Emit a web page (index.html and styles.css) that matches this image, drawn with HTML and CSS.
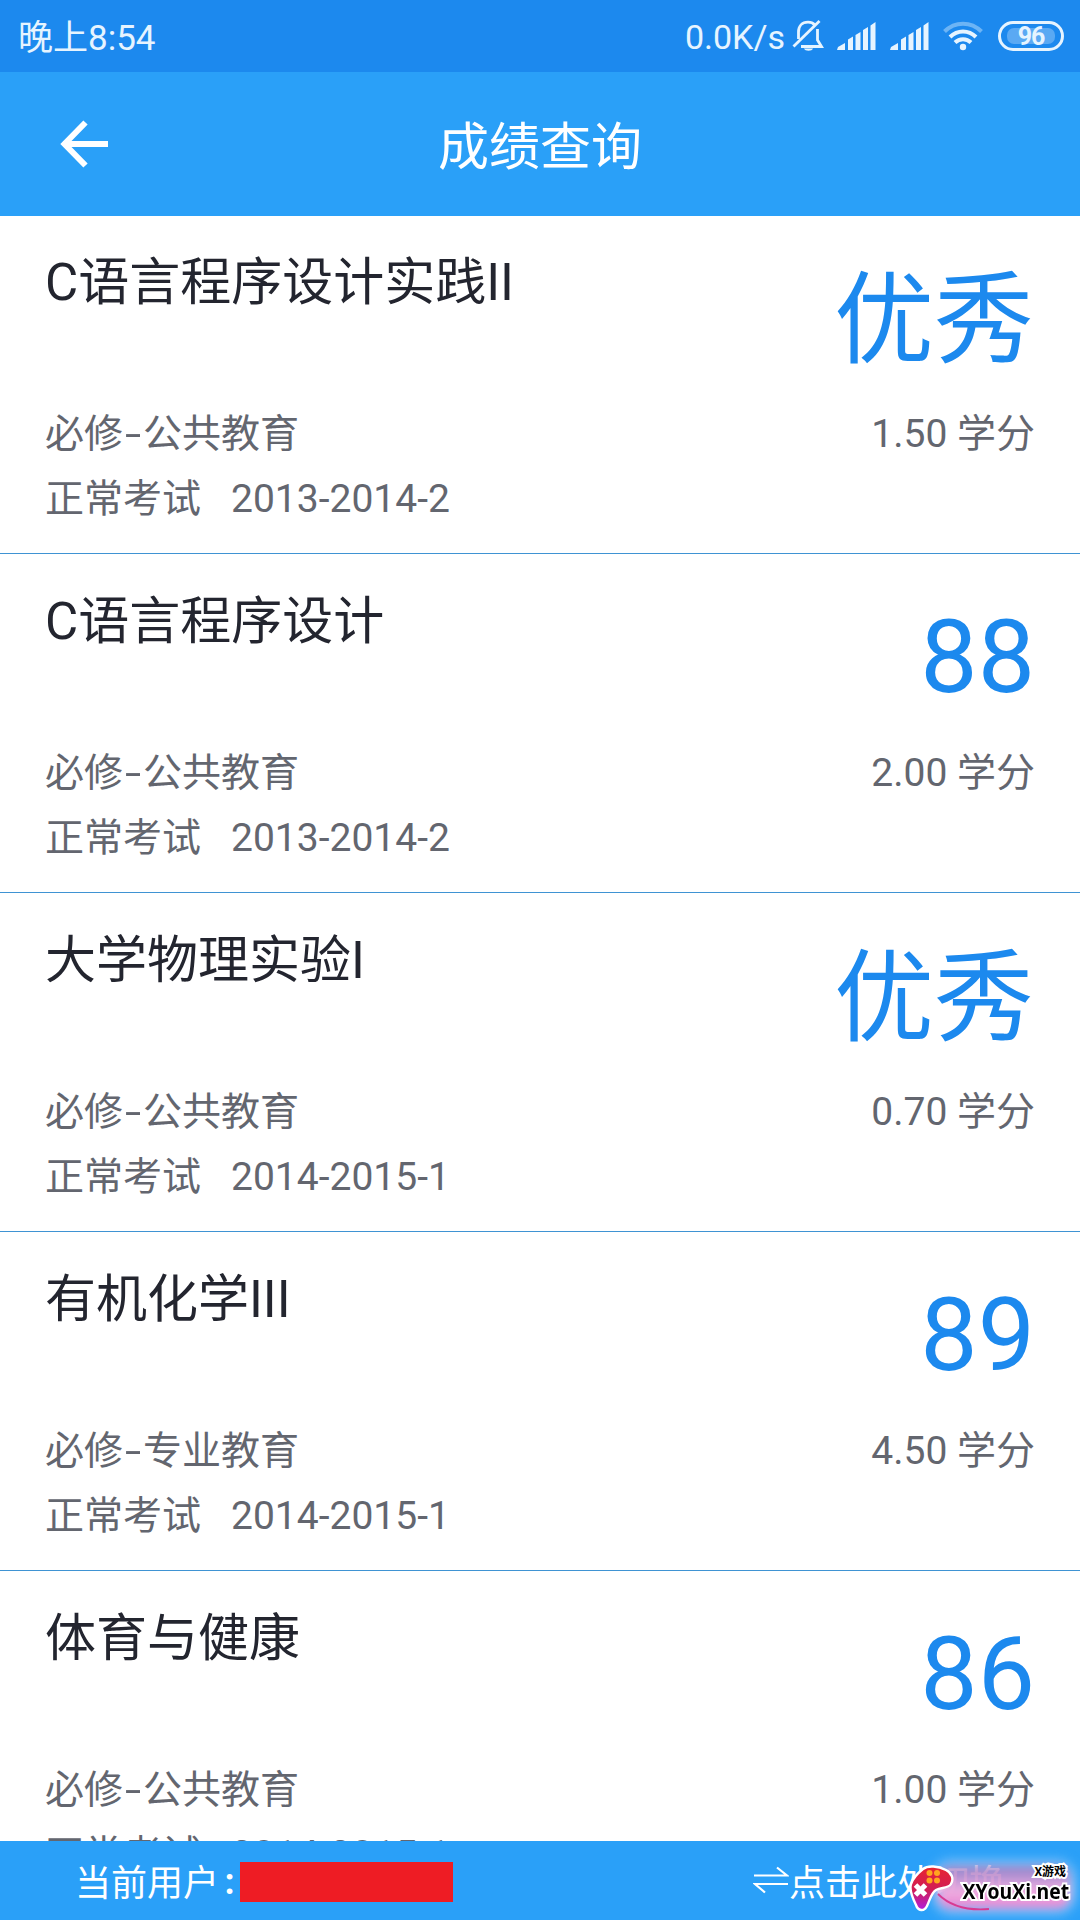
FILE: index.html
```html
<!DOCTYPE html>
<html lang="zh-CN">
<head>
    <meta charset="UTF-8">
    <meta name="viewport" content="width=device-width, initial-scale=1.0">
    <title>成绩查询</title>
    <link rel="stylesheet" href="styles.css">
</head>
<body>
    <div class="status-bar">
        <span class="time">晚上8:54</span>
        <span class="speed">0.0K/s</span>
        <svg class="icon-bell" width="32" height="34" viewBox="0 0 32 34" fill="none" stroke="#e6f4ff" stroke-width="2.8">
            <path d="M6.500 20V13C6.500 7 10 3.200 16 3.200C19 3.200 21 4 22.800 6M25.500 10V21L29.500 27.500H9"/>
            <path d="M1.500 27.500L27.500 2"/>
            <path d="M12 29.500h9c-1 3-8 3-9 0z" fill="#e6f4ff" stroke="none"/>
        </svg>
        <svg class="icon-signal" width="40" height="28" viewBox="0 0 40 28" fill="#e6f4ff">
            <path d="M0 28L1 25L8 21V28zM11 17.500L16 14.500V28H11zM18.500 13L23.500 10V28H18.500zM26 8L31 5V28H26zM33.500 3.500L38.500 0V28H33.500z"/>
        </svg>
        <svg class="icon-signal" width="40" height="28" viewBox="0 0 40 28" fill="#e6f4ff">
            <path d="M0 28L1 25L8 21V28zM11 17.500L16 14.500V28H11zM18.500 13L23.500 10V28H18.500zM26 8L31 5V28H26zM33.500 3.500L38.500 0V28H33.500z"/>
        </svg>
        <svg class="icon-wifi" width="40" height="30" viewBox="0 0 40 30" fill="none" stroke="#e6f4ff" stroke-width="4">
            <path d="M1.500 10.500C12 0 28 0 38.500 10.500" opacity=".4"/>
            <path d="M7 16C14.500 8.500 25.500 8.500 33 16"/>
            <path d="M12 21.500C16.500 17 23.500 17 28 21.500"/>
            <circle cx="20" cy="26" r="3.200" fill="#e6f4ff" stroke="none"/>
        </svg>
        <span class="battery"><span class="battery-level">96</span></span>
    </div>

    <div class="header">
        <svg class="back" width="48" height="48" viewBox="0 0 48 48" fill="none" stroke="#fff" stroke-width="6">
            <path d="M25.500 2.500L4.500 24L25.500 45.500M4.500 24H48"/>
        </svg>
        <h1>成绩查询</h1>
    </div>

    <div class="list">
        <div class="item">
            <div class="info">
                <h2>C语言程序设计实践II</h2>
                <p>必修<span class="dash">-</span>公共教育</p>
                <p>正常考试<span class="term">2013-2014-2</span></p>
            </div>
            <div class="result">
                <div class="score text">优秀</div>
                <div class="credit">1.50 学分</div>
            </div>
        </div>
        <div class="item">
            <div class="info">
                <h2>C语言程序设计</h2>
                <p>必修<span class="dash">-</span>公共教育</p>
                <p>正常考试<span class="term">2013-2014-2</span></p>
            </div>
            <div class="result">
                <div class="score">88</div>
                <div class="credit">2.00 学分</div>
            </div>
        </div>
        <div class="item">
            <div class="info">
                <h2>大学物理实验I</h2>
                <p>必修<span class="dash">-</span>公共教育</p>
                <p>正常考试<span class="term">2014-2015-1</span></p>
            </div>
            <div class="result">
                <div class="score text">优秀</div>
                <div class="credit">0.70 学分</div>
            </div>
        </div>
        <div class="item">
            <div class="info">
                <h2>有机化学III</h2>
                <p>必修<span class="dash">-</span>专业教育</p>
                <p>正常考试<span class="term">2014-2015-1</span></p>
            </div>
            <div class="result">
                <div class="score">89</div>
                <div class="credit">4.50 学分</div>
            </div>
        </div>
        <div class="item">
            <div class="info">
                <h2>体育与健康</h2>
                <p>必修<span class="dash">-</span>公共教育</p>
                <p>正常考试<span class="term">2014-2015-1</span></p>
            </div>
            <div class="result">
                <div class="score">86</div>
                <div class="credit">1.00 学分</div>
            </div>
        </div>
    </div>

    <div class="footer">
        <span class="user-label">当前用户</span>
        <span class="colon">:</span>
        <span class="user-name"></span>
        <span class="switch">
            <svg width="36" height="36" viewBox="0 0 36 36" fill="none" stroke="#fff" stroke-width="2.200">
                <path d="M1 13.500H34L24 5.500M35 22H2L12 30.500"/>
            </svg>点击此处切换
        </span>
        <div class="watermark">
            <div class="glow"></div>
            <svg class="gamepad" width="48" height="50" viewBox="0 0 48 50">
                <defs>
                    <linearGradient id="pad" x1="0" y1="0" x2="0" y2="1">
                        <stop offset="0" stop-color="#e8252f"/>
                        <stop offset=".55" stop-color="#d01d58"/>
                        <stop offset="1" stop-color="#b01de0"/>
                    </linearGradient>
                </defs>
                <path d="M15 5C20 1 30 2 38 6C44 9 46 15 43 20C40 25 33 23 28 26C23 29 22 36 19 42C16 48 10 47 8 41C4 33 1 26 3 20C5 14 10 9 15 5Z" fill="url(#pad)" stroke="#fff" stroke-width="2.400"/>
                <g fill="#ffa51f">
                    <circle cx="21.500" cy="9" r="3"/><circle cx="29" cy="9" r="3"/>
                    <circle cx="21.500" cy="16.500" r="3"/><circle cx="29" cy="16.500" r="3"/>
                </g>
                <path d="M7.500 21L17.500 31M17.500 21L7.500 31" stroke="#fff" stroke-width="5"/>
            </svg>
            <svg class="cable" width="60" height="22" viewBox="0 0 60 22" fill="none" stroke="#d83a92" stroke-width="1.800">
                <path d="M1 1C12 12 28 18 52 16"/>
            </svg>
            <span class="mark-cn">X游戏</span>
            <span class="mark-url">XYouXi.net</span>
        </div>
    </div>
</body>
</html>
```
FILE: styles.css
```css
* {
    box-sizing: border-box;
}
body {
    margin: 0;
    height: 1920px;
    display: flex;
    flex-direction: column;
    overflow: hidden;
    background-color: #fff;
    font-family: Roboto, "Noto Sans CJK SC", sans-serif;
}
h1, h2, p {
    margin: 0;
    font-weight: normal;
}
.status-bar {
    flex: none;
    display: flex;
    align-items: center;
    height: 72px;
    padding: 0 16px 0 18px;
    background-color: #1c89ee;
    color: #e6f4ff;
    font-size: 35px;
}
.time {
    flex: 1;
    padding-bottom: 3px;
}
.speed {
    padding-top: 2px;
    font-size: 34px;
}
.icon-bell {
    margin-left: 7px;
}
.icon-signal {
    margin-left: 13px;
}
.icon-wifi {
    margin-left: 13px;
}
.battery {
    width: 66px;
    height: 30px;
    margin-left: 15px;
    padding: 4px 6px;
    border: 3px solid #e6f4ff;
    border-radius: 15px;
}
.battery-level {
    display: block;
    height: 16px;
    border-radius: 7px;
    background-color: #5aa9f3;
    font-size: 25px;
    font-weight: bold;
    line-height: 17px;
    letter-spacing: -1px;
    text-align: center;
}
.header {
    flex: none;
    display: grid;
    grid-template-columns: 48px 1fr 48px;
    align-items: center;
    height: 144px;
    padding: 0 60px;
    background-color: #2aa0f8;
    color: #fff;
}
.header h1 {
    padding-top: 8px;
    font-size: 51px;
    line-height: 74px;
    text-align: center;
}
.list {
    flex: 1;
    min-height: 0;
    overflow: hidden;
    margin-top: -1px;
}
.item {
    display: flex;
    justify-content: space-between;
    height: 339px;
    padding: 0 45px;
    border-bottom: 1px solid #3f93d3;
}
.info {
    padding-top: 30px;
}
.info h2 {
    height: 157px;
    color: #23252f;
    font-size: 51px;
    line-height: 76px;
}
.info p {
    height: 65px;
    color: #63666f;
    font-size: 39px;
    line-height: 65px;
}
.dash {
    display: inline-block;
    width: 20px;
    text-align: center;
    transform: scaleX(1.5);
}
.term {
    margin-left: 30px;
}
.result {
    text-align: right;
}
.score {
    height: 138px;
    margin-top: 34px;
    color: #1c89ee;
    font-size: 102px;
    line-height: 138px;
}
.score.text {
    padding-right: 1px;
    font-size: 100px;
    line-height: 144px;
}
.credit {
    margin-top: 15px;
    color: #63666f;
    font-size: 39px;
    line-height: 65px;
}
.footer {
    flex: none;
    position: relative;
    display: flex;
    align-items: center;
    height: 79px;
    padding: 0 75px;
    background-color: #2aa0f8;
    color: #fff;
    font-size: 36px;
}
.user-label {
    padding-bottom: 2px;
}
.colon {
    width: 21px;
    padding-top: 3px;
    text-align: center;
    font-weight: bold;
}
.user-name {
    width: 213px;
    height: 40px;
    margin-top: 2px;
    background-color: #ee1c24;
}
.switch {
    display: flex;
    align-items: center;
    margin-left: auto;
    padding-bottom: 1px;
}
.watermark {
    position: absolute;
    right: 0;
    bottom: 0;
    width: 180px;
    height: 60px;
    color: #000;
}
.glow {
    position: absolute;
    left: 38px;
    top: 6px;
    width: 132px;
    height: 42px;
    border-radius: 12px;
    background: linear-gradient(rgba(160, 120, 190, 0.85), #f0b0e2 60%, #e880cf);
    box-shadow: 0 0 9px 4px #a9d3fb;
    filter: blur(4px);
}
.gamepad {
    position: absolute;
    left: 8px;
    top: 4px;
}
.cable {
    position: absolute;
    left: 37px;
    top: 33px;
}
.mark-cn, .mark-url {
    position: absolute;
    white-space: nowrap;
    font-weight: bold;
    paint-order: stroke fill;
    -webkit-text-stroke: 4px #fff;
}
.mark-cn {
    right: 14px;
    top: 4px;
    font-size: 12px;
    line-height: 16px;
}
.mark-url {
    right: 11px;
    top: 15px;
    font-family: "Open Sans", sans-serif;
    font-size: 22px;
    line-height: 30px;
    transform: scaleX(0.88);
    transform-origin: right;
}
```
